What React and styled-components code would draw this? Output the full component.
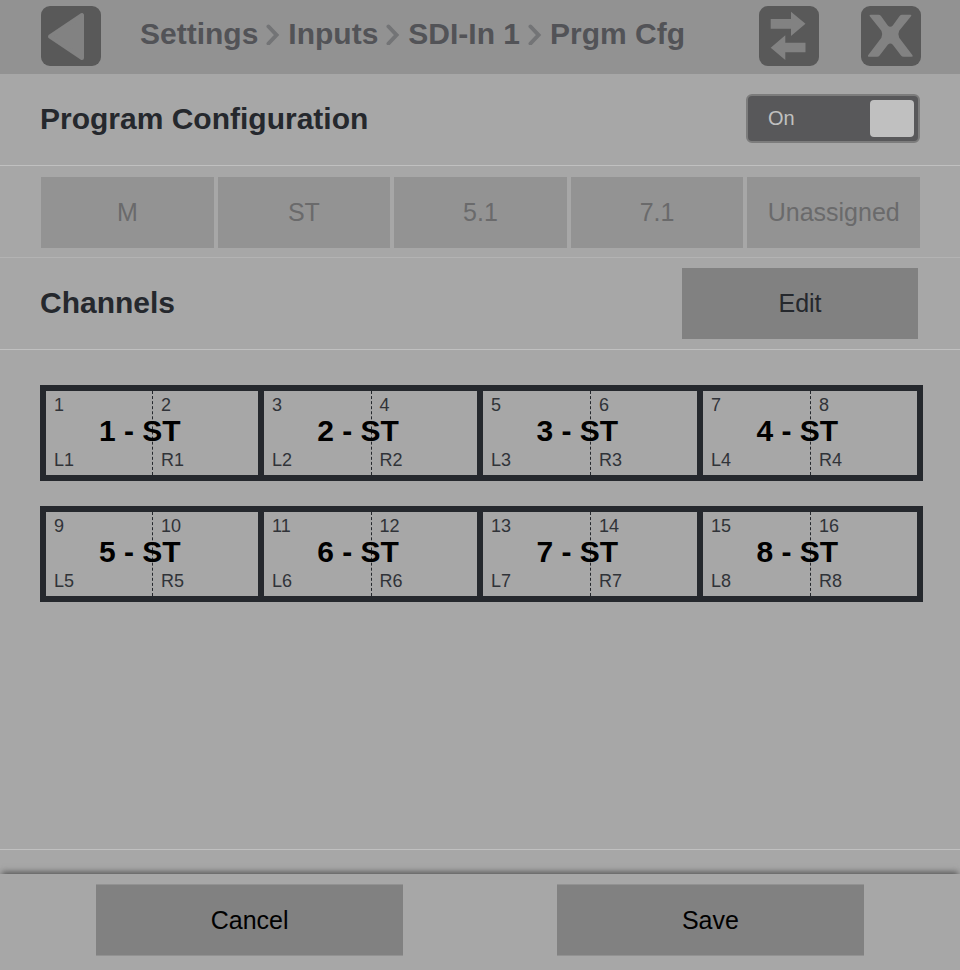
import React, { useState } from "react";
import styled, { createGlobalStyle } from "styled-components";

const GlobalStyle = createGlobalStyle`
  * {
    box-sizing: border-box;
  }

  body {
    margin: 0;
    background: #a7a7a7;
    color: #25282d;
    font-family: "Liberation Sans", Arial, sans-serif;
  }
`;

const Page = styled.div`
  display: flex;
  flex-direction: column;
  min-height: 100vh;
`;

const Header = styled.header`
  display: flex;
  align-items: center;
  height: 74px;
  padding: 0 39px 2px 41px;
  background: #929292;
`;

const IconButton = styled.button`
  flex: none;
  width: 60px;
  height: 60px;
  padding: 0;
  border: 0;
  border-radius: 9px;
  background: #595959;
  cursor: pointer;

  svg {
    display: block;
    fill: #828282;
    stroke: #828282;
    stroke-linejoin: round;
  }
`;

const HeaderActions = styled.div`
  display: flex;
  gap: 42px;
`;

const Breadcrumb = styled.nav`
  display: flex;
  flex: 1;
  align-items: center;
  gap: 8px;
  padding: 0 39px 4px;
  white-space: nowrap;

  svg {
    flex: none;
  }
`;

const Crumb = styled.a`
  color: #525357;
  font-size: 30px;
  font-weight: bold;
  line-height: 36px;
  text-decoration: none;
`;

const Section = styled.section`
  display: flex;
  align-items: center;
  justify-content: space-between;
  height: 92px;
  padding: 0 ${(props) => props.$right || "40px"} 0 40px;
  border-bottom: 1px solid ${(props) => props.$line || "#c0c0c0"};
`;

const Title = styled.h2`
  margin: 0;
  padding-bottom: 2px;
  font-size: 30px;
  font-weight: bold;
  line-height: 36px;
`;

const Switch = styled.label`
  display: flex;
  align-items: center;
  justify-content: space-between;
  width: 174px;
  height: 49px;
  margin-bottom: 2px;
  padding: 0 4px 0 20px;
  border: 2px solid #7c7c7c;
  border-radius: 6px;
  background: #58585a;
  color: #c0c0c0;
  font-size: 20px;
  cursor: pointer;
`;

const SwitchInput = styled.input`
  appearance: none;
  width: 44px;
  height: 37px;
  margin: 0;
  border-radius: 4px;
  background: #c0c0c0;
  cursor: pointer;
`;

const Button = styled.button`
  width: ${(props) => props.$width || "auto"};
  height: 71px;
  padding: 0;
  border: 0;
  background: #818181;
  color: #25282d;
  font-family: inherit;
  font-size: 25px;
  cursor: pointer;

  &:disabled {
    background: #939393;
    color: #6a6a6b;
    cursor: default;
  }
`;

const FooterButton = styled(Button)`
  height: 72px;
  border: solid #929292;
  border-width: 1px 0;
  color: #000;
`;

const FormatButtons = styled.div`
  display: grid;
  flex: 1;
  grid-template-columns: repeat(5, 1fr);
  gap: 4px;
  padding: 2px 0 0 1px;
`;

const Channels = styled.main`
  display: flex;
  flex: 1;
  flex-direction: column;
  gap: 25px;
  padding: 35px 37px 35px 40px;
  border-bottom: 1px solid #c0c0c0;
`;

const ProgramRow = styled.div`
  display: grid;
  grid-template-columns: 218fr 219fr 220fr 220fr;
  height: 96px;
  border: solid #25282d;
  border-width: 6px 0 6px 6px;
`;

const Program = styled.div`
  display: grid;
  grid-template-columns: minmax(0, 1fr) minmax(0, 1fr);
  grid-template-rows: 100%;
  border-right: 6px solid #25282d;
`;

const Channel = styled.div`
  display: flex;
  grid-row: 1;
  grid-column: 1;
  flex-direction: column;
  justify-content: space-between;
  padding: 4px 8px;
  color: #303338;
  font-size: 18px;
  line-height: 21px;

  & + & {
    grid-column: 2;
    border-left: 1px dashed #25282d;
  }
`;

const ProgramName = styled.div`
  grid-row: 1;
  grid-column: 1 / 3;
  align-self: center;
  padding: 0 0 4px 25%;
  color: #000;
  font-size: 30px;
  font-weight: bold;
  line-height: 36px;
  white-space: nowrap;
`;

const Footer = styled.footer`
  display: flex;
  justify-content: space-between;
  height: 96px;
  margin-top: 24px;
  padding: 10px 10% 0;
  background: #a7a7a7;
  box-shadow: 0 -4px 6px -2px #555;
`;

const Chevron = () => (
  <svg width="14" height="22" viewBox="0 0 14 22" aria-hidden="true">
    <path
      d="M2.5 3.5L10.5 12L2.5 20.5"
      fill="none"
      stroke="#737476"
      strokeWidth="4"
      strokeLinecap="round"
    />
  </svg>
);

const crumbs = ["Settings", "Inputs", "SDI-In 1", "Prgm Cfg"];
const formats = ["M", "ST", "5.1", "7.1", "Unassigned"];
const rows = [
  [1, 2, 3, 4],
  [5, 6, 7, 8],
];

export default function App() {
  const [on, setOn] = useState(true);

  return (
    <Page>
      <GlobalStyle />
      <Header>
        <IconButton aria-label="Back">
          <svg width="60" height="60" viewBox="0 0 60 60">
            <path d="M9 30.5L41 9V52Z" strokeWidth="4" />
          </svg>
        </IconButton>
        <Breadcrumb aria-label="Breadcrumb">
          {crumbs.map((crumb, i) => (
            <React.Fragment key={crumb}>
              {i > 0 && <Chevron />}
              <Crumb href="#">{crumb}</Crumb>
            </React.Fragment>
          ))}
        </Breadcrumb>
        <HeaderActions>
          <IconButton aria-label="Switch">
            <svg width="60" height="60" viewBox="0 0 60 60">
              <path
                d="M11.7 13H32V5.7L46.5 17.7L32 30V22.7H11.7Z M46.5 36.7H26.3V29.3L11.7 41.7L26.3 54V46.3H46.5Z"
                strokeWidth="0"
              />
            </svg>
          </IconButton>
          <IconButton aria-label="Close">
            <svg width="60" height="60" viewBox="0 0 60 60">
              <path
                d="M9.5 8.7H17.5Q19 8.7 20 10.1L26.8 19.4Q29.3 22 31.8 19.4L38.6 10.1Q39.6 8.7 41.1 8.7H49.6Q51 8.7 50 10.3L38.2 24.8Q36.4 28.4 38.2 31.8L51.5 49.2Q52.3 50.8 50.6 50.8H42.5Q41 50.8 40 49.6L31.8 38.8Q29.3 36.4 26.8 38.8L18.6 49.6Q17.6 50.8 16.1 50.8H8Q6.3 50.8 7.1 49.2L20.4 31.8Q22.2 28.4 20.4 24.8L8.8 10.3Q7.8 8.7 9.5 8.7Z"
                strokeWidth="0"
              />
            </svg>
          </IconButton>
        </HeaderActions>
      </Header>

      <Section>
        <Title>Program Configuration</Title>
        <Switch>
          {on ? "On" : "Off"}
          <SwitchInput
            type="checkbox"
            role="switch"
            checked={on}
            onChange={() => setOn(!on)}
          />
        </Switch>
      </Section>

      <Section $line="#b3b3b3">
        <FormatButtons>
          {formats.map((format) => (
            <Button key={format} disabled>
              {format}
            </Button>
          ))}
        </FormatButtons>
      </Section>

      <Section $right="42px">
        <Title>Channels</Title>
        <Button $width="236px">Edit</Button>
      </Section>

      <Channels>
        {rows.map((programs) => (
          <ProgramRow key={programs[0]}>
            {programs.map((n) => (
              <Program key={n}>
                <Channel>
                  <span>{n * 2 - 1}</span>
                  <span>L{n}</span>
                </Channel>
                <Channel>
                  <span>{n * 2}</span>
                  <span>R{n}</span>
                </Channel>
                <ProgramName>{n} - ST</ProgramName>
              </Program>
            ))}
          </ProgramRow>
        ))}
      </Channels>

      <Footer>
        <FooterButton $width="40%">Cancel</FooterButton>
        <FooterButton $width="40%">Save</FooterButton>
      </Footer>
    </Page>
  );
}
